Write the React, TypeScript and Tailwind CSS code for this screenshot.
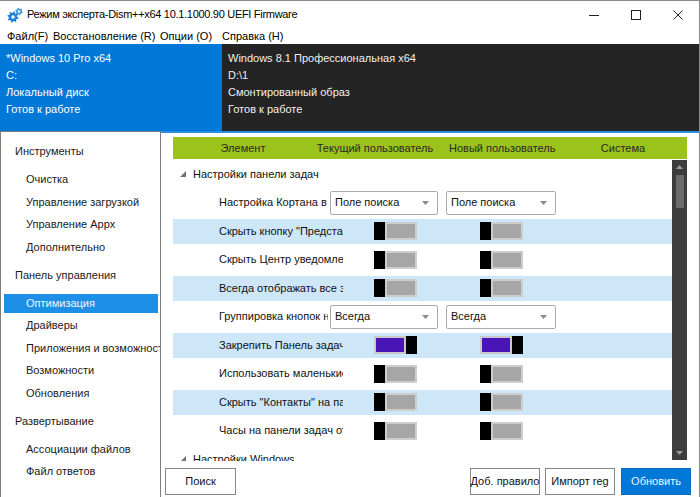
import React from "react";

function gearPath(cx: number, cy: number, ro: number, ri: number, n: number) {
  const pts: string[] = [];
  for (let i = 0; i < n; i++) {
    const a0 = (i / n) * Math.PI * 2;
    const step = (Math.PI * 2) / n;
    const angs = [a0, a0 + step * 0.15, a0 + step * 0.45, a0 + step * 0.6, a0 + step * 0.9];
    const rs = [ri, ro, ro, ri, ri];
    angs.forEach((a, k) => pts.push(`${(cx + rs[k] * Math.cos(a)).toFixed(2)},${(cy + rs[k] * Math.sin(a)).toFixed(2)}`));
  }
  return "M" + pts.join("L") + "Z";
}

const GearIcon = () => (
  <svg width="16" height="16" viewBox="0 0 16 16">
    <path d={gearPath(6, 10, 5.6, 4.2, 8)} fill="#1d7fd6" />
    <circle cx="6" cy="10" r="1.8" fill="white" />
    <path d={gearPath(12, 4.5, 3.8, 2.8, 6)} fill="#3b95e0" />
    <circle cx="12" cy="4.5" r="1.2" fill="white" />
  </svg>
);

const Toggle = ({ on }: { on?: boolean }) => (
  <div className="flex w-[43px] h-[18px] shrink-0">
    {on ? (
      <>
        <div className="flex-1 border-2 border-[#c9c9c9] bg-[#4a15b6]" />
        <div className="w-[11px] bg-black" />
      </>
    ) : (
      <>
        <div className="w-[11px] bg-black" />
        <div className="flex-1 border-2 border-[#cdcdcd] bg-[#a6a6a6]" />
      </>
    )}
  </div>
);

const Dropdown = ({ text, w }: { text: string; w: string }) => (
  <div className={`${w} h-[24px] shrink-0 border border-[#ababab] rounded-[2px] bg-white flex items-center justify-between pl-[4px] pr-[8px]`}>
    <span className="text-[#111] whitespace-nowrap">{text}</span>
    <svg width="7" height="4" viewBox="0 0 7 4">
      <polygon points="0,0 7,0 3.5,4" fill="#8a8a8a" />
    </svg>
  </div>
);

const Tri = () => (
  <svg width="6" height="6" viewBox="0 0 6 6" className="shrink-0">
    <polygon points="6,0 6,6 0,6" fill="#707070" />
  </svg>
);

type Row =
  | { kind: "tree"; text: string }
  | { kind: "dd"; text: string; a: string; b: string; blue?: boolean }
  | { kind: "tg"; text: string; a?: boolean; b?: boolean; blue?: boolean };

const rows: Row[] = [
  { kind: "tree", text: "Настройки панели задач" },
  { kind: "dd", text: "Настройка Кортана в панели задач", a: "Поле поиска", b: "Поле поиска" },
  { kind: "tg", text: "Скрыть кнопку \"Представление задач\"", blue: true },
  { kind: "tg", text: "Скрыть Центр уведомлений" },
  { kind: "tg", text: "Всегда отображать все значки в области уведомлений", blue: true },
  { kind: "dd", text: "Группировка кнопок на панели задач", a: "Всегда", b: "Всегда" },
  { kind: "tg", text: "Закрепить Панель задач", a: true, b: true, blue: true },
  { kind: "tg", text: "Использовать маленькие кнопки панели задач" },
  { kind: "tg", text: "Скрыть \"Контакты\" на панели задач", blue: true },
  { kind: "tg", text: "Часы на панели задач отображают секунды" },
  { kind: "tree", text: "Настройки Windows" },
];

const side: { t: string; h?: boolean; sel?: boolean }[] = [
  { t: "Инструменты", h: true },
  { t: "Очистка" },
  { t: "Управление загрузкой" },
  { t: "Управление Appx" },
  { t: "Дополнительно" },
  { t: "Панель управления", h: true },
  { t: "Оптимизация", sel: true },
  { t: "Драйверы" },
  { t: "Приложения и возможности" },
  { t: "Возможности" },
  { t: "Обновления" },
  { t: "Развертывание", h: true },
  { t: "Ассоциации файлов" },
  { t: "Файл ответов" },
];

export default function App() {
  return (
    <div className="w-[700px] h-[497px] overflow-hidden bg-white border-t border-r border-[#8a8a8a] flex flex-col font-['Liberation_Sans',Arial,sans-serif] text-[11px] leading-none text-[#111]">
      {/* title bar */}
      <div className="h-[27px] shrink-0 flex items-center">
        <div className="ml-[7px] mt-[1px]">
          <GearIcon />
        </div>
        <div className="ml-[4px] text-[#000] whitespace-nowrap text-[11px] tracking-[-0.3px]">Режим эксперта-Dism++x64 10.1.1000.90 UEFI Firmware</div>
        <div className="flex-1" />
        <svg width="10" height="10" viewBox="0 0 10 10" className="mr-[32px]">
          <line x1="0" y1="5.5" x2="10" y2="5.5" stroke="#222" strokeWidth="1" />
        </svg>
        <svg width="10" height="10" viewBox="0 0 10 10" className="mr-[32px]">
          <rect x="0.5" y="0.5" width="9" height="9" fill="none" stroke="#222" strokeWidth="1" />
        </svg>
        <svg width="10" height="10" viewBox="0 0 10 10" className="mr-[16px]">
          <path d="M0.5 0.5L9.5 9.5M9.5 0.5L0.5 9.5" stroke="#222" strokeWidth="1" />
        </svg>
      </div>
      {/* menu */}
      <div className="h-[16px] shrink-0 flex items-center pl-[7px] text-[#000] whitespace-nowrap">
        <span className="w-[46px]">Файл(F)</span>
        <span className="w-[107px]">Восстановление (R)</span>
        <span className="w-[62px]">Опции (О)</span>
        <span>Справка (H)</span>
      </div>
      {/* info panels */}
      <div className="h-[87px] shrink-0 flex text-white leading-[17px] whitespace-nowrap">
        <div className="w-[222px] bg-[#0078d7] pl-[6px] pt-[6px]">
          <div>*Windows 10 Pro x64</div>
          <div>C:</div>
          <div>Локальный диск</div>
          <div>Готов к работе</div>
        </div>
        <div className="flex-1 bg-[#242424] pl-[6px] pt-[6px] text-[#f0f0f0]">
          <div>Windows 8.1 Профессиональная x64</div>
          <div>D:\1</div>
          <div>Смонтированный образ</div>
          <div>Готов к работе</div>
        </div>
      </div>
      {/* main */}
      <div className="flex-1 flex min-h-0">
        {/* sidebar */}
        <div className="w-[161px] shrink-0 border-l border-r border-t border-[#7d7d7d] pt-[3px] overflow-hidden">
          {side.map((s, i) =>
            s.h ? (
              <div key={i} className="h-[33.5px] flex items-center pl-[14px] text-[#1a1a1a] whitespace-nowrap">
                {s.t}
              </div>
            ) : (
              <div key={i} className="h-[22.5px] flex items-center ml-[3px] mr-[2px]">
                <div
                  className={`h-[19px] w-full flex items-center pl-[22px] whitespace-nowrap ${
                    s.sel ? "bg-[#1e8fe6] text-[#eef5fc]" : "text-[#1a1a1a]"
                  }`}
                >
                  {s.t}
                </div>
              </div>
            )
          )}
        </div>
        {/* content */}
        <div className="flex-1 flex flex-col border-t-2 border-[#2a8ee3] min-w-0">
          <div className="mt-[4px] mx-[12px] h-[22px] shrink-0 bg-[#9bc31b] flex items-center text-[#2a2a2a] whitespace-nowrap">
            <div className="w-[140px] text-center">Элемент</div>
            <div className="w-[124px] text-center">Текущий пользователь</div>
            <div className="ml-[12px] w-[100px] text-center">Новый пользователь</div>
            <div className="ml-[14px] w-[120px] text-center">Система</div>
          </div>
          <div className="h-[302px] shrink-0 flex ml-[12px] mr-[12px]">
            <div className="flex-1 overflow-hidden pt-[1px]">
              {rows.map((r, i) => {
                if (r.kind === "tree")
                  return (
                    <div key={i} className="h-[28.5px] flex items-center pl-[7px] whitespace-nowrap">
                      <Tri />
                      <span className="ml-[7px]">{r.text}</span>
                    </div>
                  );
                if (r.kind === "dd")
                  return (
                    <div key={i} className="h-[28.5px] flex items-center">
                      <div className="ml-[46px] w-[109px] overflow-hidden whitespace-nowrap shrink-0">{r.text}</div>
                      <div className="ml-[2px]">
                        <Dropdown text={r.a} w="w-[108px]" />
                      </div>
                      <div className="ml-[8px]">
                        <Dropdown text={r.b} w="w-[110px]" />
                      </div>
                    </div>
                  );
                return (
                  <div key={i} className="h-[28.5px] py-[2px]">
                    <div className={`h-full flex items-center ${r.blue ? "bg-[#cde6f8]" : ""}`}>
                      <div className="ml-[46px] w-[124px] overflow-hidden whitespace-nowrap shrink-0">{r.text}</div>
                      <div className="ml-[31px]">
                        <Toggle on={r.a} />
                      </div>
                      <div className="ml-[63px]">
                        <Toggle on={r.b} />
                      </div>
                    </div>
                  </div>
                );
              })}
            </div>
            <div className="w-[15px] shrink-0 bg-[#3d3d3d] mt-[1px] mb-[1px] flex flex-col items-center">
              <svg width="7" height="4" viewBox="0 0 7 4" className="mt-[5px]">
                <polygon points="0,4 7,4 3.5,0" fill="#9a9a9a" />
              </svg>
              <div className="mt-[6px] w-[8px] h-[33px] bg-[#6b6b6b]" />
              <div className="flex-1" />
              <svg width="7" height="4" viewBox="0 0 7 4" className="mb-[5px]">
                <polygon points="0,0 7,0 3.5,4" fill="#9a9a9a" />
              </svg>
            </div>
          </div>
          <div className="mt-[7px] h-[27px] shrink-0 flex whitespace-nowrap">
            <div className="ml-[4px] w-[71px] h-full border border-[#858585] bg-white flex items-center justify-center">Поиск</div>
            <div className="flex-1" />
            <div className="w-[70px] h-full border border-[#858585] bg-white flex items-center justify-center">Доб. правило</div>
            <div className="ml-[5px] w-[70px] h-full border border-[#858585] bg-white flex items-center justify-center">Импорт reg</div>
            <div className="ml-[6px] mr-[8px] w-[70px] h-full border border-[#0a6cc0] bg-[#0078d7] text-[#eef5fc] flex items-center justify-center">Обновить</div>
          </div>
        </div>
      </div>
    </div>
  );
}
